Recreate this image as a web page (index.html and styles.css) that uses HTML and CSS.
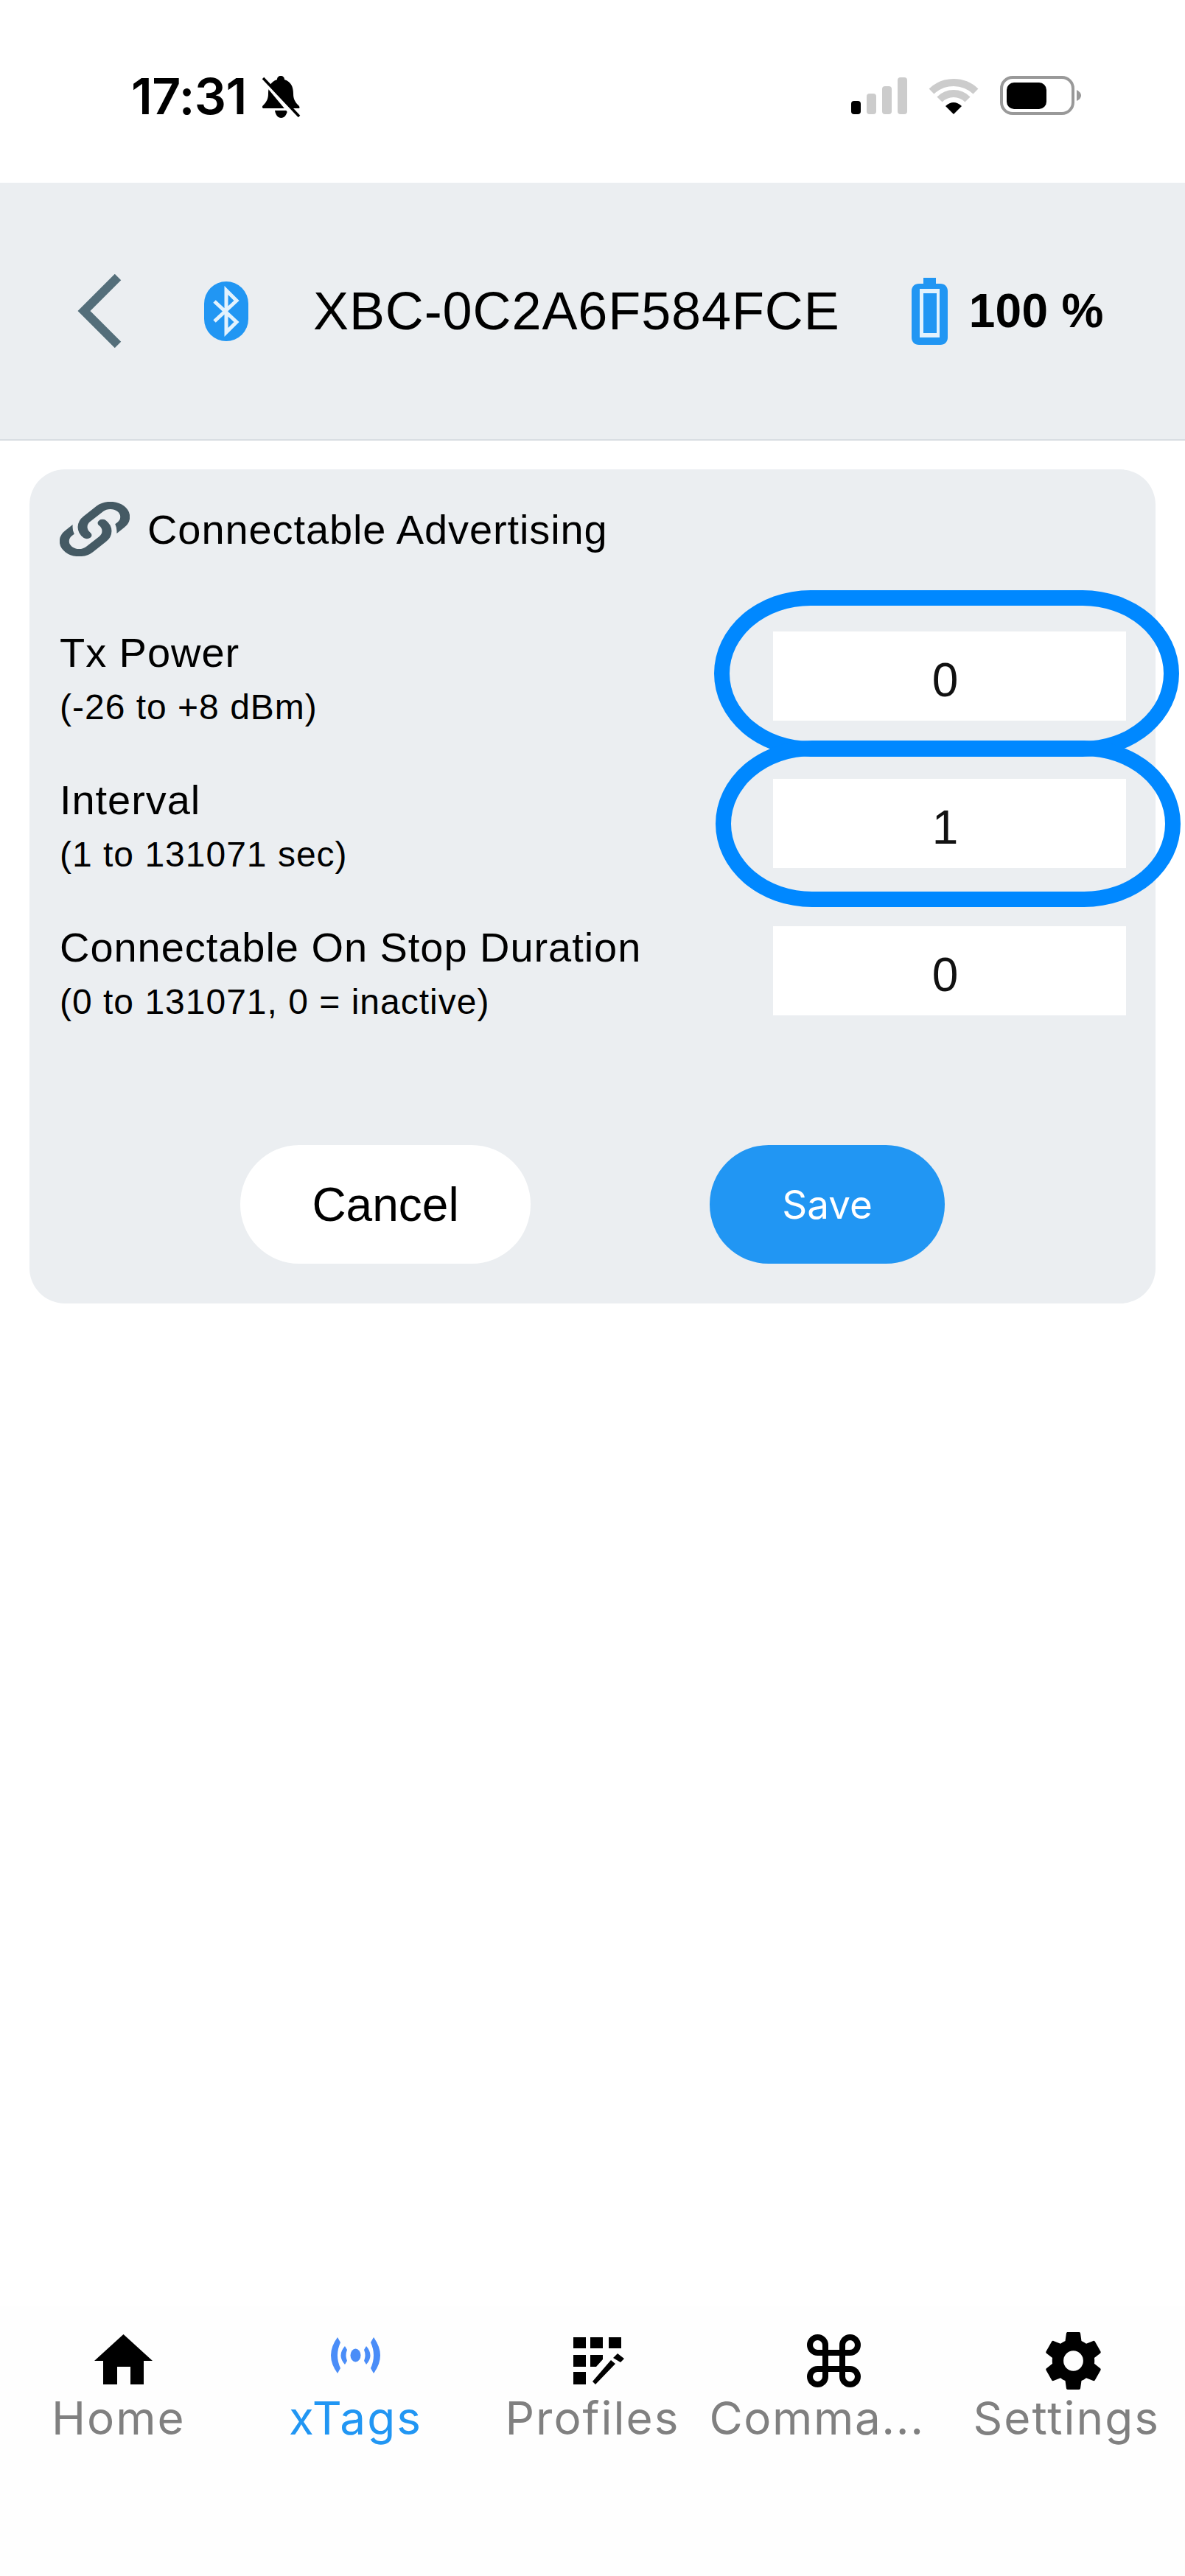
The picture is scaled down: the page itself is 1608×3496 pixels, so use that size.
FILE: index.html
```html
<!DOCTYPE html>
<html lang="en">
<head>
  <meta charset="UTF-8" />
  <title>Connectable Advertising</title>
  <link rel="stylesheet" href="styles.css">
</head>
<body>
  <div class="page">
    <div class="status-bar">
      <div class="status-left">
        <span class="time">17:31</span>
        <svg class="bell" viewBox="0 0 53 57">
          <path fill="#000" d="M26 0c3 0 5 2 5 5 9 3 12 10 12 19 0 7 2 11 7 16 2 2 2 4 0 4H3c-2 0-3-2-1-4 5-5 7-9 7-16 0-9 3-16 12-19 0-3 2-5 5-5zM18 47h17c-1 6-4 10-8.500 10S19 53 18 47z"/>
          <path stroke="#fff" stroke-width="6" d="M-2 0 48 60"/>
          <path stroke="#000" stroke-width="3.500" d="M2 3 51 55"/>
        </svg>
      </div>
      <div class="status-right">
        <div class="signal">
          <span class="bar bar-on bar-1"></span>
          <span class="bar bar-2"></span>
          <span class="bar bar-3"></span>
          <span class="bar bar-4"></span>
        </div>
        <svg class="wifi" viewBox="0 0 68 50">
          <path fill="none" stroke="#ccc" stroke-width="10" d="M4 19A43.500 43.500 0 0 1 64 19"/>
          <path fill="none" stroke="#ccc" stroke-width="10" d="M15 30A26.500 26.500 0 0 1 53 30"/>
          <path fill="#000" d="M23 39Q34 29 45 39L34 50Z"/>
        </svg>
        <svg class="phone-battery" viewBox="0 0 110 53">
          <rect x="2" y="2" width="97" height="49" rx="15" fill="#fff" stroke="#999" stroke-width="4"/>
          <rect x="9" y="9" width="54" height="36" rx="10" fill="#000"/>
          <path fill="#999" d="M104 19c4 2 6 5 6 7.500s-2 6-6 7.500z"/>
        </svg>
      </div>
    </div>

    <div class="top-bar">
      <svg class="back" viewBox="0 0 60 100">
        <polyline points="55,4 9,50 55,96" fill="none" stroke="#546e7a" stroke-width="12"/>
      </svg>
      <svg class="bt" viewBox="0 0 60 81">
        <rect width="60" height="81" rx="30" fill="#2196f3"/>
        <polyline points="14,27 44,55 30,69 30,12 44,26 14,54" fill="none" stroke="#e3f2fd" stroke-width="5"/>
      </svg>
      <span class="device-name">XBC-0C2A6F584FCE</span>
      <svg class="tag-battery" viewBox="0 0 49 91">
        <path fill="#2196f3" d="M16 0h17v8h6c6 0 10 4 10 10v63c0 6-4 10-10 10H10C4 91 0 87 0 81V18C0 12 4 8 10 8h6z"/>
        <rect x="11" y="15" width="27" height="66" fill="#e3f2fd"/>
        <rect x="16" y="21" width="18" height="54" fill="#2196f3"/>
      </svg>
      <span class="percent">100 %</span>
    </div>

    <main class="content">
      <section class="card">
        <div class="card-title">
          <svg class="link" viewBox="2.500 2.500 19 19" preserveAspectRatio="none">
            <path fill="#455a64" stroke="#455a64" stroke-width="0.600" d="M10.59,13.41C11,13.8 11,14.44 10.59,14.83C10.2,15.22 9.56,15.22 9.17,14.83C7.22,12.88 7.22,9.71 9.17,7.76V7.76L12.71,4.22C14.66,2.27 17.83,2.27 19.78,4.22C21.73,6.17 21.73,9.34 19.78,11.29L18.29,12.78C18.3,11.96 18.17,11.14 17.89,10.36L18.36,9.88C19.54,8.71 19.54,6.81 18.36,5.64C17.19,4.46 15.29,4.46 14.12,5.64L10.59,9.17C9.41,10.34 9.41,12.24 10.59,13.41M13.41,9.17C13.8,8.78 14.44,8.78 14.83,9.17C16.78,11.12 16.78,14.29 14.83,16.24V16.24L11.29,19.78C9.34,21.73 6.17,21.73 4.22,19.78C2.27,17.83 2.27,14.66 4.22,12.71L5.71,11.22C5.7,12.04 5.83,12.86 6.11,13.65L5.64,14.12C4.46,15.29 4.46,17.19 5.64,18.36C6.81,19.54 8.71,19.54 9.88,18.36L13.41,14.83C14.59,13.66 14.59,11.76 13.41,10.59C13,10.2 13,9.56 13.41,9.17Z"/>
          </svg>
          <span>Connectable Advertising</span>
        </div>

        <div class="field">
          <div class="field-text">
            <div class="field-label">Tx Power</div>
            <div class="field-hint">(-26 to +8 dBm)</div>
          </div>
          <input class="field-input" type="text" value="0">
        </div>
        <div class="field">
          <div class="field-text">
            <div class="field-label">Interval</div>
            <div class="field-hint">(1 to 131071 sec)</div>
          </div>
          <input class="field-input" type="text" value="1">
        </div>
        <div class="field">
          <div class="field-text">
            <div class="field-label">Connectable On Stop Duration</div>
            <div class="field-hint">(0 to 131071, 0 = inactive)</div>
          </div>
          <input class="field-input" type="text" value="0">
        </div>

        <div class="actions">
          <button class="btn btn-cancel">Cancel</button>
          <button class="btn btn-save">Save</button>
        </div>
      </section>
    </main>

    <nav class="tabs">
      <div class="tab">
        <svg class="tab-icon icon-home" viewBox="0 0 79 68">
          <path d="M39.500 0 79 36H67V68H49V44H31V68H12V36H0Z"/>
        </svg>
        <span class="tab-label">Home</span>
      </div>
      <div class="tab tab-active">
        <svg class="tab-icon icon-tags" viewBox="0 0 71 49">
          <g fill="#4a8df8">
            <ellipse cx="35.500" cy="24.500" rx="7" ry="9"/>
            <path d="M11 0 15 7Q7 24.500 15 42L11 49Q-7 24.500 11 0Z"/>
            <path d="M60 0 56 7Q64 24.500 56 42L60 49Q78 24.500 60 0Z"/>
            <path d="M21 12 24 17Q21 24.500 24 32L21 37Q10 24.500 21 12Z"/>
            <path d="M50 12 47 17Q50 24.500 47 32L50 37Q61 24.500 50 12Z"/>
          </g>
        </svg>
        <span class="tab-label">xTags</span>
      </div>
      <div class="tab">
        <svg class="tab-icon icon-profiles" viewBox="0 0 69 64">
          <path d="M0 0H17V15H0ZM23 0H40V15H23ZM48 0H65V15H48ZM0 24H17V40H0ZM23 24H40V30L31 40H23ZM0 47H17V64H0Z"/>
          <path d="M30 64 26 60 51 31 57 36ZM54 28 60 22 69 29 64 34Z"/>
        </svg>
        <span class="tab-label">Profiles</span>
      </div>
      <div class="tab">
        <svg class="tab-icon icon-command" viewBox="0 0 73 72">
          <path fill="none" stroke="#000" stroke-width="8" d="M25 25H14.500A10.500 10.500 0 1 1 25 14.500V57.500A10.500 10.500 0 1 1 14.500 47H58.500A10.500 10.500 0 1 1 48 57.500V14.500A10.500 10.500 0 1 1 58.500 25H25Z"/>
        </svg>
        <span class="tab-label tab-label-cut">Comma...</span>
      </div>
      <div class="tab">
        <svg class="tab-icon icon-gear" viewBox="2.200 2 19.600 20" preserveAspectRatio="none">
          <path d="M12,15.5A3.5,3.5 0 0,1 8.5,12A3.5,3.5 0 0,1 12,8.5A3.5,3.5 0 0,1 15.5,12A3.5,3.5 0 0,1 12,15.5M19.43,12.97C19.47,12.65 19.5,12.33 19.5,12C19.5,11.67 19.47,11.34 19.43,11L21.54,9.37C21.73,9.22 21.78,8.95 21.66,8.73L19.66,5.27C19.54,5.05 19.27,4.96 19.05,5.05L16.56,6.05C16.04,5.66 15.5,5.32 14.87,5.07L14.5,2.42C14.46,2.18 14.25,2 14,2H10C9.75,2 9.54,2.18 9.5,2.42L9.13,5.07C8.5,5.32 7.96,5.66 7.44,6.05L4.95,5.05C4.73,4.96 4.46,5.05 4.34,5.27L2.34,8.73C2.21,8.95 2.27,9.22 2.46,9.37L4.57,11C4.53,11.34 4.5,11.67 4.5,12C4.5,12.33 4.53,12.65 4.57,12.97L2.46,14.63C2.27,14.78 2.21,15.05 2.34,15.27L4.34,18.73C4.46,18.95 4.73,19.03 4.95,18.95L7.44,17.94C7.96,18.34 8.5,18.68 9.13,18.93L9.5,21.58C9.54,21.82 9.75,22 10,22H14C14.25,22 14.46,21.82 14.5,21.58L14.87,18.93C15.5,18.67 16.04,18.34 16.56,17.94L19.05,18.95C19.27,19.03 19.54,18.95 19.66,18.73L21.66,15.27C21.78,15.05 21.73,14.78 21.54,14.63L19.43,12.97Z"/>
        </svg>
        <span class="tab-label">Settings</span>
      </div>
    </nav>

    <!-- hand drawn highlights on top of the screenshot -->
    <div class="ring ring-power"></div>
    <div class="ring ring-interval"></div>
  </div>
</body>
</html>
```

FILE: styles.css
```css
* {
  box-sizing: border-box;
}

body {
  margin: 0;
  background: #fff;
  font-family: 'Liberation Sans', Arial, sans-serif;
  color: #000;
}

.page {
  position: relative;
  width: 1608px;
  height: 3496px;
  overflow: hidden;
  display: flex;
  flex-direction: column;
}

/* phone status bar */
.status-bar {
  height: 248px;
  flex: none;
  display: flex;
  justify-content: space-between;
  align-items: flex-start;
  padding: 103px 141px 0 178px;
}

.status-left {
  display: flex;
  align-items: flex-start;
  gap: 20px;
}

.time {
  font-family: Inter, sans-serif;
  font-weight: 600;
  font-size: 68px;
  line-height: 54px;
  letter-spacing: -0.5px;
}

.bell {
  width: 53px;
  height: 57px;
}

.status-right {
  display: flex;
  align-items: flex-end;
  gap: 29px;
}

.signal {
  display: flex;
  align-items: flex-end;
  gap: 8px;
  height: 50px;
  margin-bottom: 1px;
}

.bar {
  width: 13px;
  background: #ccc;
  border-radius: 4px;
}

.bar-on { background: #000; }
.bar-1 { height: 18px; }
.bar-2 { height: 28px; }
.bar-3 { height: 38px; }
.bar-4 { height: 50px; }

.wifi {
  width: 68px;
  height: 50px;
  margin-bottom: 1px;
}

.phone-battery {
  width: 110px;
  height: 53px;
}

/* device header */
.top-bar {
  height: 350px;
  flex: none;
  display: flex;
  align-items: center;
  background: #ebeef1;
  border-bottom: 2px solid #d8dde2;
  padding: 0 0 0 105px;
}

.back {
  width: 60px;
  height: 100px;
}

.bt {
  width: 60px;
  height: 81px;
  margin-left: 112px;
}

.device-name {
  font-size: 72px;
  letter-spacing: 0.9px;
  margin-left: 88px;
}

.tag-battery {
  width: 49px;
  height: 91px;
  margin-left: 97px;
}

.percent {
  font-size: 64px;
  font-weight: bold;
  letter-spacing: 0.3px;
  margin-left: 29px;
}

.content {
  flex: 1;
  padding: 39px 40px 0;
}

.card {
  height: 1132px;
  background: #ebeef1;
  border-radius: 48px;
  padding: 44px 40px 0 41px;
}

.card-title {
  display: flex;
  align-items: center;
  gap: 24px;
  font-size: 56px;
  letter-spacing: 0.9px;
  margin-bottom: 102px;
}

.link {
  width: 95px;
  height: 74px;
}

.field {
  display: flex;
  justify-content: space-between;
  height: 121px;
  margin-bottom: 79px;
}

.field-label {
  font-size: 56px;
  letter-spacing: 0.95px;
  line-height: 58px;
}

.field-hint {
  font-size: 48px;
  letter-spacing: 1px;
  line-height: 54px;
  margin-top: 18px;
}

.field-input {
  width: 479px;
  height: 121px;
  border: none;
  border-radius: 0;
  background: #fff;
  color: #111;
  text-align: center;
  font-family: 'Liberation Sans', Arial, sans-serif;
  font-size: 64px;
  padding: 10px 12px 0 0;
}

.actions {
  display: flex;
  gap: 243px;
  padding-left: 245px;
  margin-top: 176px;
}

.btn {
  height: 161px;
  border: none;
  border-radius: 80px;
  font-family: 'Liberation Sans', Arial, sans-serif;
}

.btn-cancel {
  width: 394px;
  background: #fff;
  color: #000;
  font-size: 64px;
}

.btn-save {
  width: 319px;
  background: #2196f3;
  color: #fff;
  font-family: Inter, sans-serif;
  font-size: 53px;
}

/* bottom tabs */
.tabs {
  height: 366px;
  flex: none;
  display: grid;
  grid-template-columns: repeat(5, 1fr);
  padding-top: 35px;
  background: #fefefe;
}

.tab {
  display: flex;
  flex-direction: column;
  align-items: center;
  height: 150px;
  position: relative;
}

.tab-icon {
  height: 72px;
  fill: #000;
}

.icon-home { width: 79px; height: 68px; margin: 3px 0 0 14px; }
.icon-tags { width: 71px; height: 49px; margin-top: 7px; }
.icon-profiles { width: 69px; height: 64px; margin: 7px 0 0 18px; }
.icon-command { width: 73px; height: 72px; margin: 3px 0 0 12px; }
.icon-gear { width: 75px; height: 78px; margin-left: 18px; }

.tab-label {
  position: absolute;
  top: 81px;
  font-family: Inter, sans-serif;
  font-size: 62px;
  line-height: 72px;
  letter-spacing: 2px;
  color: #808080;
  white-space: nowrap;
}

.tab-active .tab-label {
  color: #2196f3;
}

.tab-label-cut {
  margin-left: -34px;
  letter-spacing: 1.6px;
}

/* blue rings drawn over the first two fields */
.ring {
  position: absolute;
  border: 21px solid #0088ff;
  border-radius: 131px / 113px;
  height: 226px;
}

.ring-power {
  left: 969px;
  top: 801px;
  width: 631px;
}

.ring-interval {
  left: 971px;
  top: 1005px;
  width: 631px;
}
```
